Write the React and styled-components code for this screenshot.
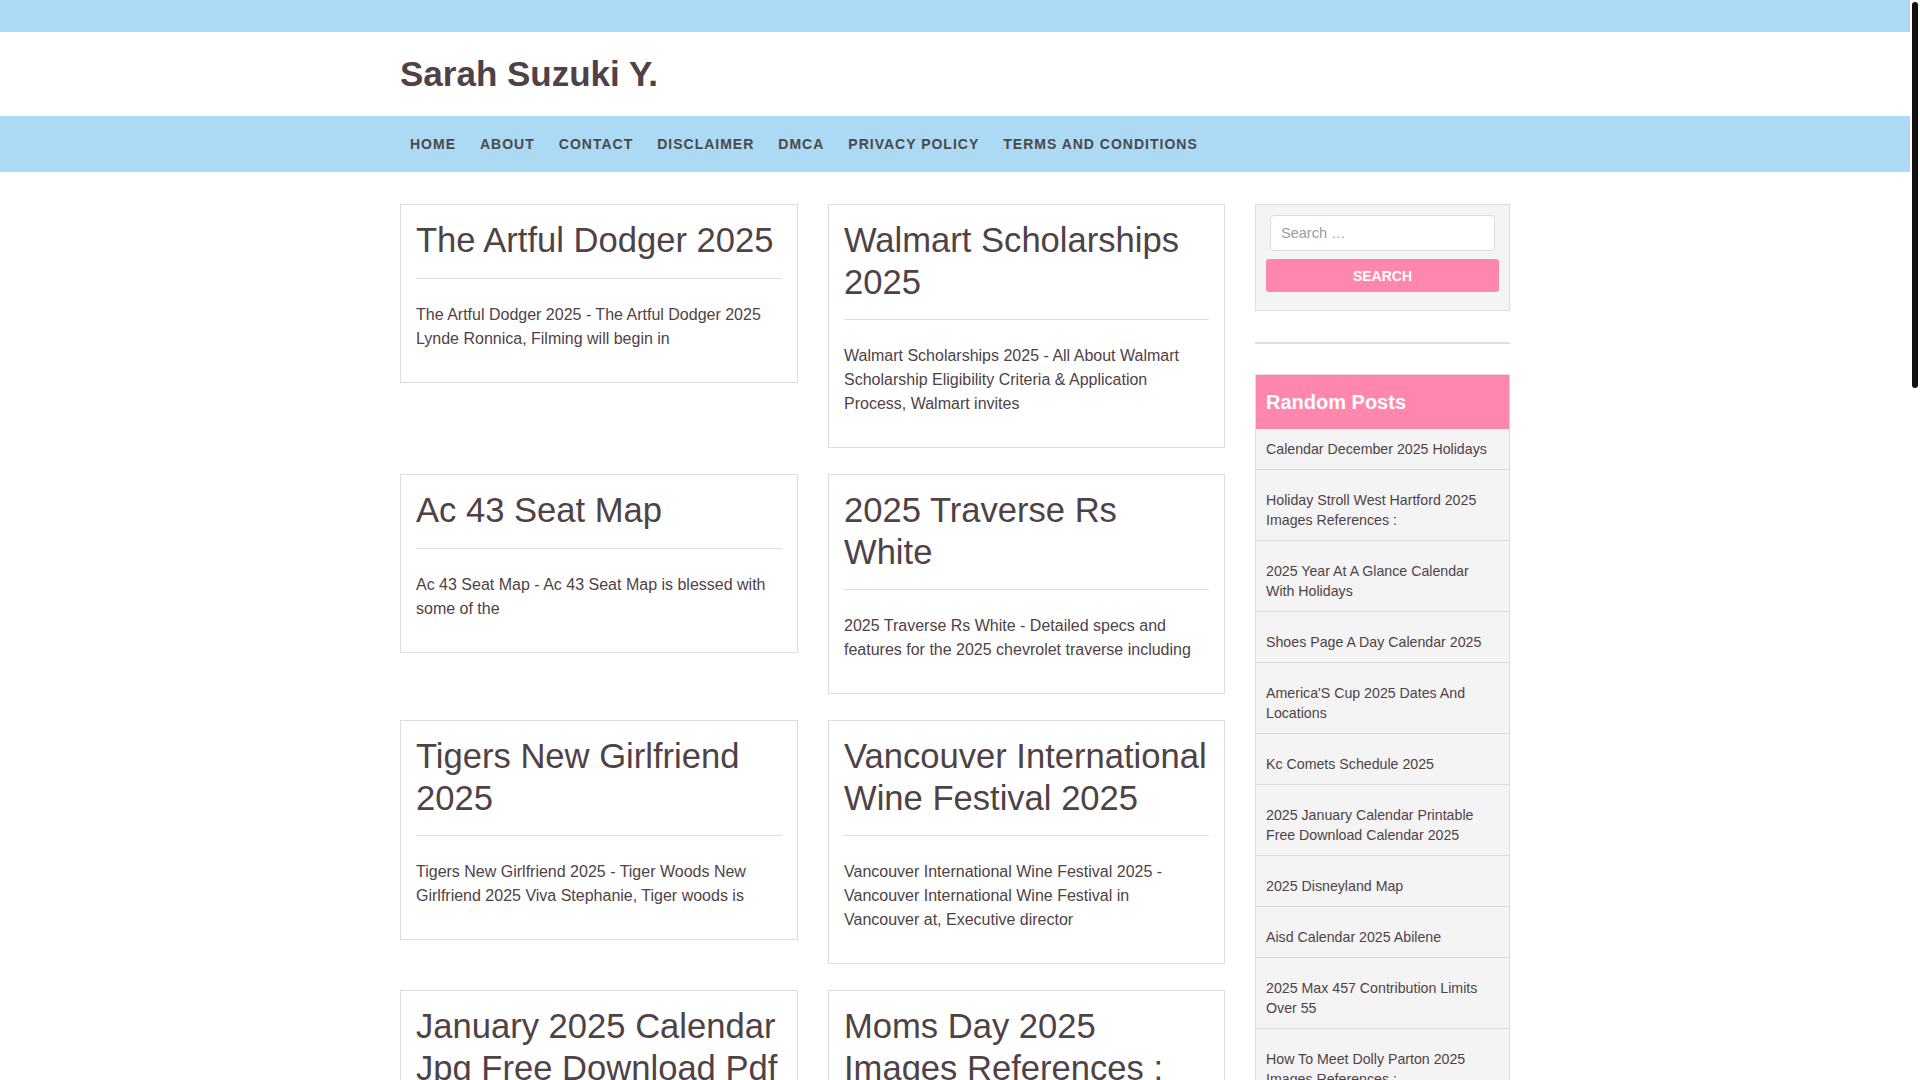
import React from "react";
import styled, { createGlobalStyle } from "styled-components";

const GlobalStyle = createGlobalStyle`
  body {
    margin: 0;
    background: #fff;
    color: #4f4247;
    font-family: "Liberation Sans", Arial, sans-serif;
    font-size: 16px;
  }
  * {
    box-sizing: border-box;
  }
`;

const Page = styled.div`
  margin-right: 10px;
`;

const ScrollThumb = styled.div`
  position: fixed;
  top: 2px;
  right: 2px;
  width: 6px;
  height: 386px;
  border-radius: 3px;
  background: #111;
`;

const TopBar = styled.div`
  height: 32px;
  background: #acd9f3;
`;

const Container = styled.div`
  width: 1110px;
  margin: 0 auto;
`;

const Header = styled.header`
  padding: 22px 0;
`;

const SiteTitle = styled.h1`
  margin: 0;
  font-size: 35px;
  line-height: 40px;
  font-weight: 700;
  color: #4f4247;
`;

const NavBar = styled.nav`
  background: #acd9f3;
`;

const NavList = styled.ul`
  display: flex;
  gap: 4px;
  list-style: none;
  margin: 0;
  padding: 0;
`;

const NavItem = styled.li`
  padding: 0 10px;
  line-height: 56px;
  font-size: 14px;
  font-weight: 700;
  letter-spacing: 1px;
  text-transform: uppercase;
  color: #4a4a4a;
`;

const Main = styled(Container)`
  display: grid;
  grid-template-columns: 825px 255px;
  gap: 30px;
  padding-top: 32px;
`;

const Posts = styled.div`
  display: grid;
  grid-template-columns: 398px 397px;
  column-gap: 30px;
  row-gap: 26px;
  align-items: start;
`;

const Card = styled.article`
  border: 1px solid #ddd;
  background: #fff;
  padding: 15px;
`;

const CardTitle = styled.h2`
  margin: 0;
  padding-bottom: 16px;
  border-bottom: 1px solid #ddd;
  font-size: 34.6px;
  line-height: 1.2;
  font-weight: 400;
  color: #4f4247;
`;

const Excerpt = styled.p`
  margin: 24px 0 16px;
  padding-right: 10px;
  font-size: 16px;
  line-height: 24px;
`;

const Sidebar = styled.aside`
  display: flex;
  flex-direction: column;
`;

const SearchWidget = styled.form`
  background: #f4f4f4;
  border: 1px solid #ddd;
  padding: 10px 10px 18px;
`;

const SearchInput = styled.input`
  display: block;
  width: calc(100% - 8px);
  height: 36px;
  margin: 0 4px;
  padding: 0 10px;
  border: 1px solid #ddd;
  border-radius: 4px;
  background: #fff;
  font-family: inherit;
  font-size: 14.5px;
  color: #4f4247;

  &::placeholder {
    color: #97a1a1;
  }
`;

const SearchButton = styled.button`
  display: block;
  width: 100%;
  height: 33px;
  margin-top: 8px;
  border: none;
  border-radius: 3px;
  background: #ff87ae;
  color: #fff;
  font-family: inherit;
  font-size: 14px;
  font-weight: 700;
  text-transform: uppercase;
`;

const Divider = styled.hr`
  height: 2px;
  margin: 31px 0 30px;
  border: none;
  background: #ddd;
`;

const Widget = styled.section`
  border: 1px solid #ddd;
  background: #f4f4f4;
`;

const WidgetTitle = styled.h3`
  margin: 0;
  padding: 15px 10px;
  background: #ff87ae;
  color: #fff;
  font-size: 20px;
  line-height: 24px;
  font-weight: 700;
`;

const PostList = styled.ul`
  list-style: none;
  margin: 0;
  padding: 0;
`;

const PostLink = styled.li`
  padding: 20px 14px 10px 10px;
  border-bottom: 1px solid #ddd;
  font-size: 14.2px;
  line-height: 20px;
  color: #4f4247;

  &:first-child {
    padding-top: 10px;
  }
  &:last-child {
    border-bottom: none;
  }
`;

const Pagination = styled.div`
  grid-column: 1 / -1;
  display: flex;
  gap: 8px;
  padding: 10px 0 40px;
`;

const PageNum = styled.span`
  padding: 8px 14px;
  border: 1px solid #ddd;
  background: ${(p) => (p.$active ? "#ff87ae" : "#fff")};
  color: ${(p) => (p.$active ? "#fff" : "#4f4247")};
  font-size: 14px;
`;

const Footer = styled.footer`
  margin-top: 40px;
  background: #acd9f3;
  padding: 24px 0;
  font-size: 14px;
  color: #4a4a4a;
  text-align: center;
`;

const navLinks = [
  "Home",
  "About",
  "Contact",
  "Disclaimer",
  "DMCA",
  "Privacy Policy",
  "Terms and Conditions",
];

const posts = [
  {
    title: "The Artful Dodger 2025",
    text: "The Artful Dodger 2025 - The Artful Dodger 2025 Lynde Ronnica, Filming will begin in",
  },
  {
    title: "Walmart Scholarships 2025",
    text: "Walmart Scholarships 2025 - All About Walmart Scholarship Eligibility Criteria & Application Process, Walmart invites",
  },
  {
    title: "Ac 43 Seat Map",
    text: "Ac 43 Seat Map - Ac 43 Seat Map is blessed with some of the",
  },
  {
    title: "2025 Traverse Rs White",
    text: "2025 Traverse Rs White - Detailed specs and features for the 2025 chevrolet traverse including",
  },
  {
    title: "Tigers New Girlfriend 2025",
    text: "Tigers New Girlfriend 2025 - Tiger Woods New Girlfriend 2025 Viva Stephanie, Tiger woods is",
  },
  {
    title: "Vancouver International Wine Festival 2025",
    text: "Vancouver International Wine Festival 2025 - Vancouver International Wine Festival in Vancouver at, Executive director",
  },
  {
    title: "January 2025 Calendar Jpg Free Download Pdf",
    text: "January 2025 Calendar Jpg Free Download Pdf - Free printable january 2025 calendar templates in",
  },
  {
    title: "Moms Day 2025 Images References :",
    text: "Moms Day 2025 Images References : Mother's day 2025 falls on sunday, may",
  },
  {
    title: "Nfl Playoff Schedule 2025",
    text: "Nfl Playoff Schedule 2025 - The full schedule for the 2025 nfl playoffs, including",
  },
  {
    title: "Best Suv 2025 Under 30k",
    text: "Best Suv 2025 Under 30k - Looking for an affordable suv with plenty of",
  },
  {
    title: "Easter Sunday 2025 Date",
    text: "Easter Sunday 2025 Date - Easter sunday falls on april 20 in 2025, and",
  },
  {
    title: "Coachella 2025 Lineup Poster",
    text: "Coachella 2025 Lineup Poster - The official lineup for the coachella valley music and",
  },
  {
    title: "Super Bowl 2025 Halftime Show",
    text: "Super Bowl 2025 Halftime Show - Everything you need to know about the super",
  },
  {
    title: "2025 Honda Pilot Trim Levels",
    text: "2025 Honda Pilot Trim Levels - Compare the trims of the 2025 honda pilot, including",
  },
  {
    title: "Chinese New Year 2025 Animal",
    text: "Chinese New Year 2025 Animal - The year of the snake begins on january",
  },
  {
    title: "Irs Tax Brackets 2025",
    text: "Irs Tax Brackets 2025 - The irs has released the new federal income tax",
  },
  {
    title: "Kentucky Derby 2025 Odds",
    text: "Kentucky Derby 2025 Odds - Early odds and contenders for the 151st running of",
  },
  {
    title: "Summer Olympics 2025 Schedule",
    text: "Summer Olympics 2025 Schedule - A look at the major international sporting events",
  },
  {
    title: "Toyota Tacoma 2025 Colors",
    text: "Toyota Tacoma 2025 Colors - Explore the exterior paint options available for the",
  },
  {
    title: "Spring Break 2025 Dates",
    text: "Spring Break 2025 Dates - Find spring break dates for schools and universities across",
  },
];

const randomPosts = [
  "Calendar December 2025 Holidays",
  "Holiday Stroll West Hartford 2025 Images References :",
  "2025 Year At A Glance Calendar With Holidays",
  "Shoes Page A Day Calendar 2025",
  "America'S Cup 2025 Dates And Locations",
  "Kc Comets Schedule 2025",
  "2025 January Calendar Printable Free Download Calendar 2025",
  "2025 Disneyland Map",
  "Aisd Calendar 2025 Abilene",
  "2025 Max 457 Contribution Limits Over 55",
  "How To Meet Dolly Parton 2025 Images References :",
  "Nba Finals 2025 Schedule",
  "2025 Lunar Calendar Printable",
  "Ramadan 2025 Start Date",
  "Wimbledon 2025 Draw Results",
];

const App = () => {
  return (
    <Page>
      <GlobalStyle />
      <TopBar />
      <Container>
        <Header>
          <SiteTitle>Sarah Suzuki Y.</SiteTitle>
        </Header>
      </Container>
      <NavBar>
        <Container>
          <NavList>
            {navLinks.map((link) => (
              <NavItem key={link}>{link}</NavItem>
            ))}
          </NavList>
        </Container>
      </NavBar>

      <Main>
        <Posts>
          {posts.map((post) => (
            <Card key={post.title}>
              <CardTitle>{post.title}</CardTitle>
              <Excerpt>{post.text}</Excerpt>
            </Card>
          ))}
          <Pagination>
            <PageNum $active>1</PageNum>
            <PageNum>2</PageNum>
            <PageNum>3</PageNum>
            <PageNum>Next »</PageNum>
          </Pagination>
        </Posts>

        <Sidebar>
          <SearchWidget onSubmit={(e) => e.preventDefault()}>
            <SearchInput type="search" placeholder="Search …" />
            <SearchButton type="submit">Search</SearchButton>
          </SearchWidget>
          <Divider />
          <Widget>
            <WidgetTitle>Random Posts</WidgetTitle>
            <PostList>
              {randomPosts.map((item) => (
                <PostLink key={item}>{item}</PostLink>
              ))}
            </PostList>
          </Widget>
        </Sidebar>
      </Main>

      <Footer>Copyright © 2025 Sarah Suzuki Y.</Footer>
      <ScrollThumb />
    </Page>
  );
};

export default App;
